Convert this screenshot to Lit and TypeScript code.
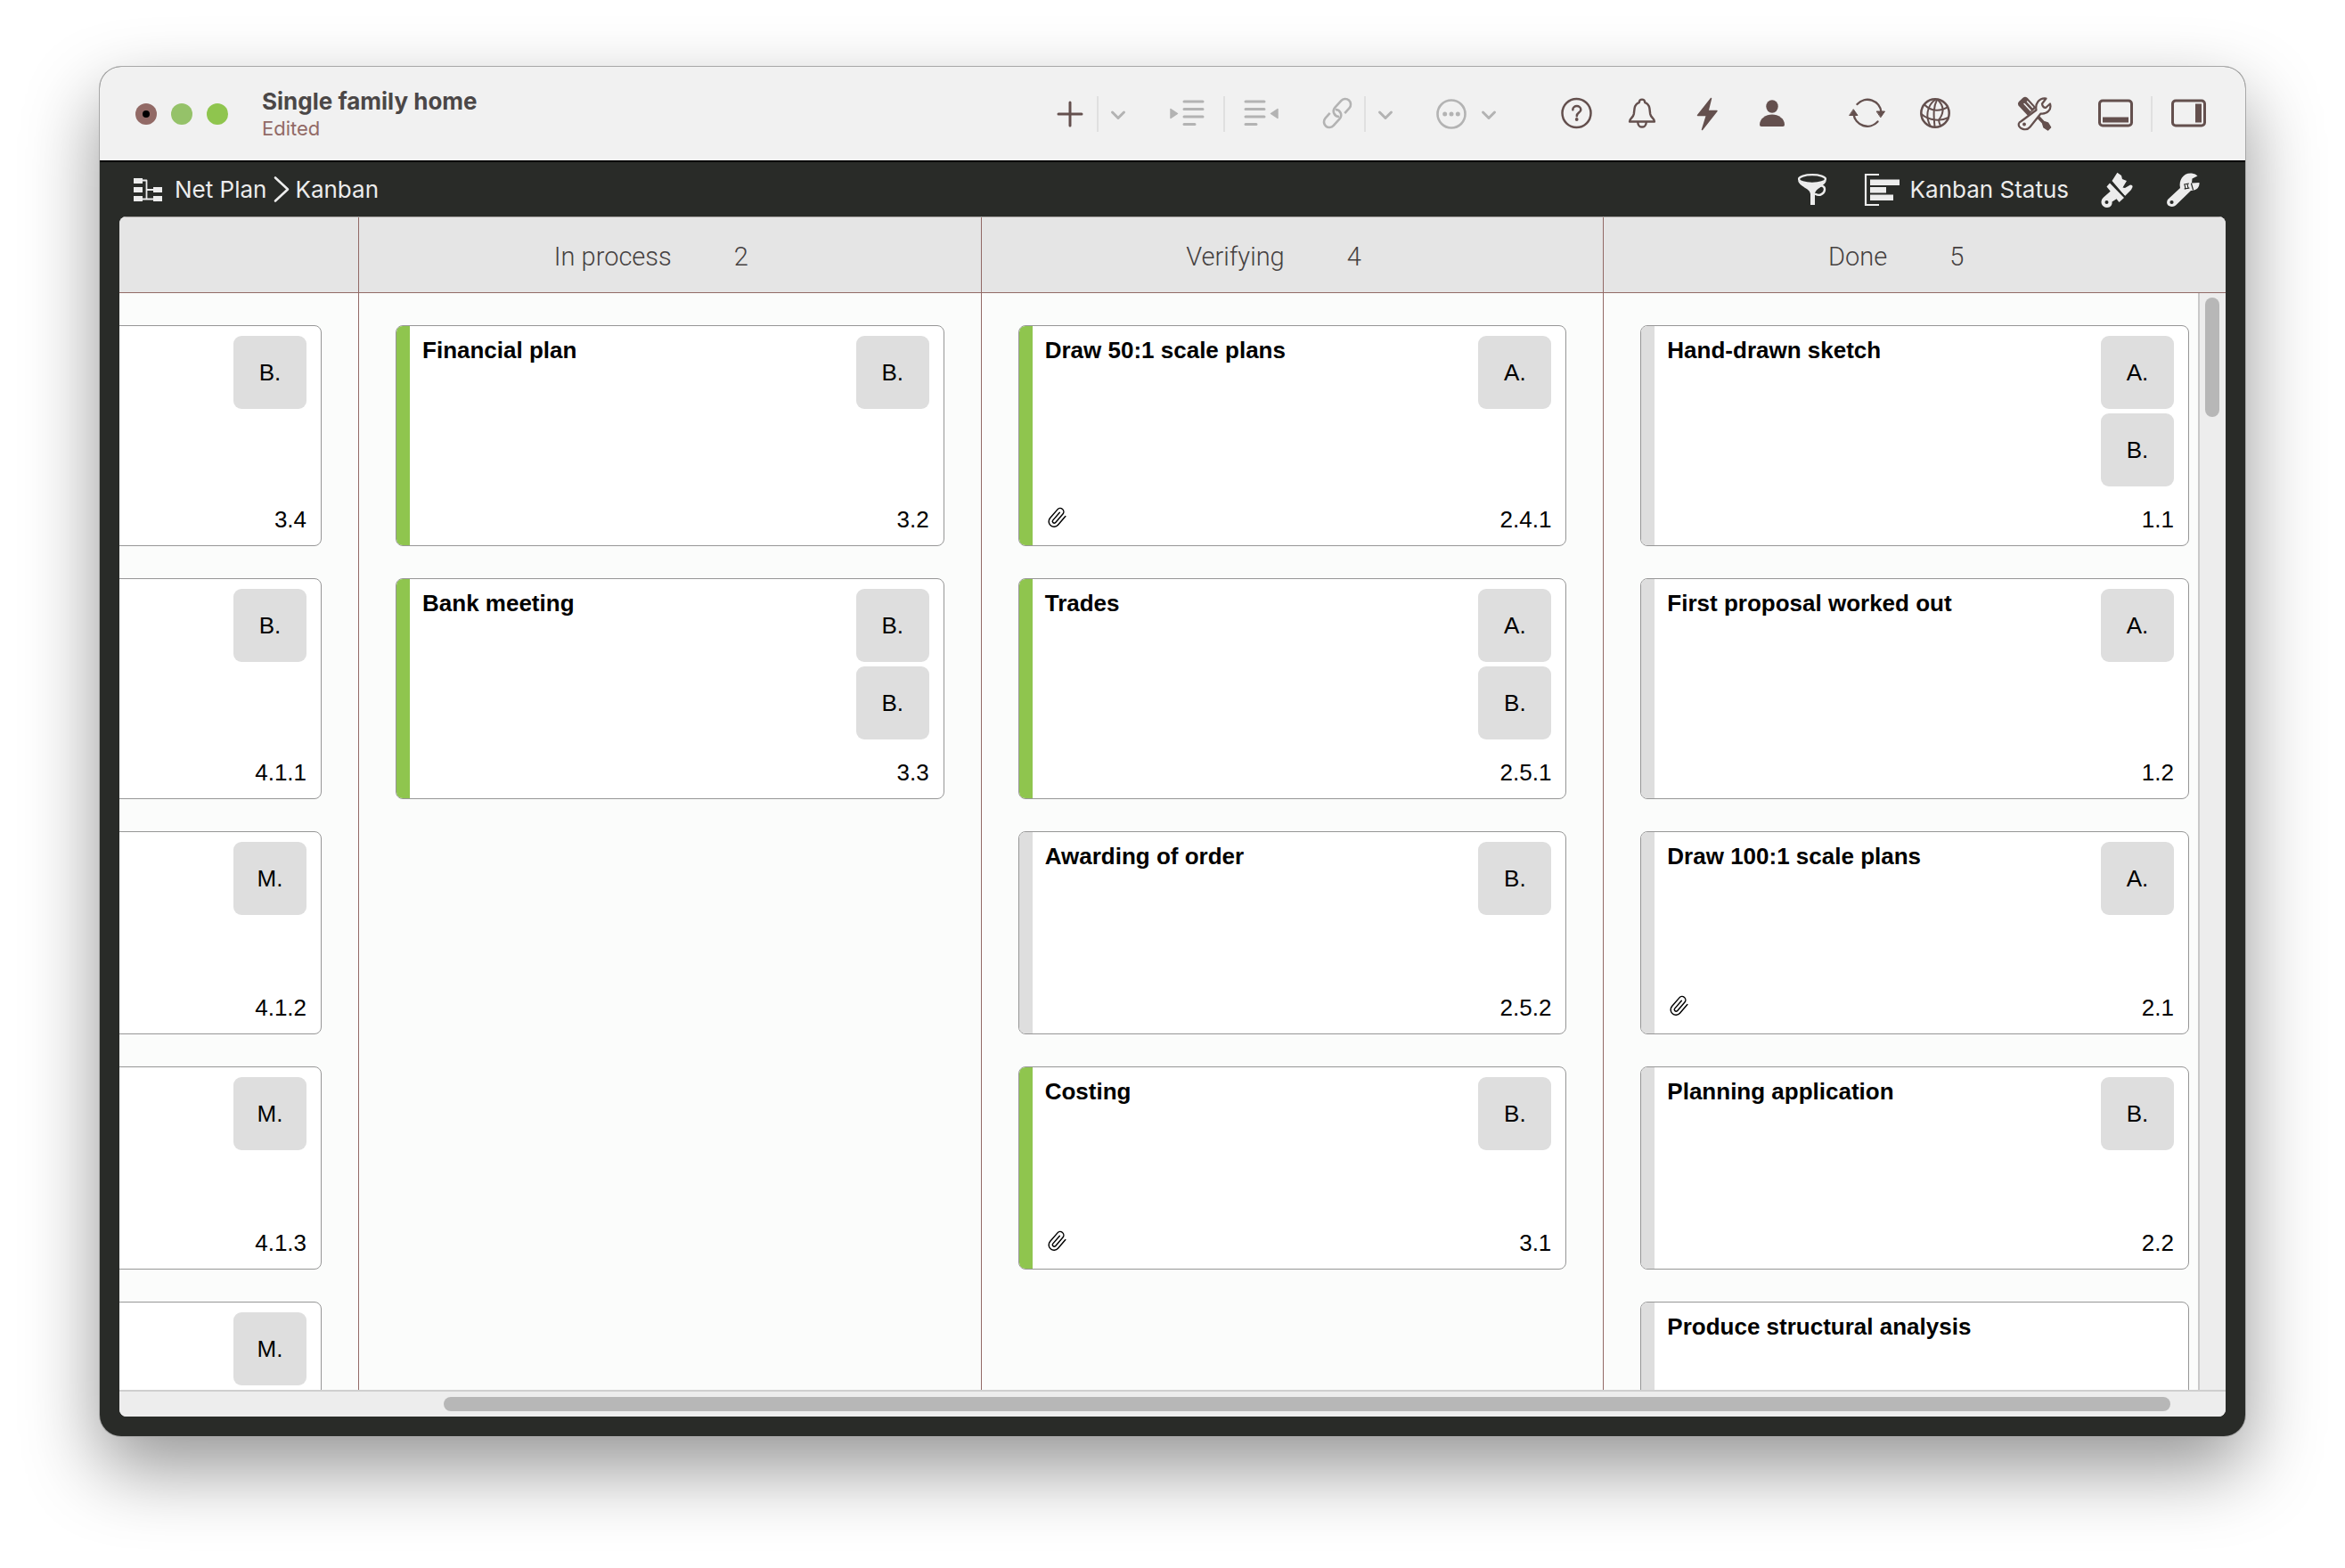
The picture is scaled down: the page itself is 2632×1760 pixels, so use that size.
import { LitElement, html, css, svg, nothing } from "lit";
import { customElement, property } from "lit/decorators.js";
import { classMap } from "lit/directives/class-map.js";

type Card = {
  title?: string;
  people: string[];
  code?: string;
  active?: boolean;
  files?: boolean;
};
type Column = { name?: string; cards: Card[] };

const COLUMNS: Column[] = [
  {
    cards: [
      { people: ["B."], code: "3.4" },
      { people: ["B."], code: "4.1.1" },
      { people: ["M."], code: "4.1.2" },
      { people: ["M."], code: "4.1.3" },
      { people: ["M."] },
    ],
  },
  {
    name: "In process",
    cards: [
      { title: "Financial plan", people: ["B."], code: "3.2", active: true },
      { title: "Bank meeting", people: ["B.", "B."], code: "3.3", active: true },
    ],
  },
  {
    name: "Verifying",
    cards: [
      { title: "Draw 50:1 scale plans", people: ["A."], code: "2.4.1", active: true, files: true },
      { title: "Trades", people: ["A.", "B."], code: "2.5.1", active: true },
      { title: "Awarding of order", people: ["B."], code: "2.5.2" },
      { title: "Costing", people: ["B."], code: "3.1", active: true, files: true },
    ],
  },
  {
    name: "Done",
    cards: [
      { title: "Hand-drawn sketch", people: ["A.", "B."], code: "1.1" },
      { title: "First proposal worked out", people: ["A."], code: "1.2" },
      { title: "Draw 100:1 scale plans", people: ["A."], code: "2.1", files: true },
      { title: "Planning application", people: ["B."], code: "2.2" },
      { title: "Produce structural analysis", people: [] },
    ],
  },
];

/* Toolbar glyphs, each drawn on a 40 x 40 grid. */
const GLYPHS = {
  plus: svg`<path d="M20 7v26M7 20h26" stroke-width="3" />`,
  indent: svg`<path d="M16 6h21M16 14.500h21M16 23h21M16 31.500h12" stroke-width="3" />
    <path d="M1 14.500v10l7.500-5z" fill="currentColor" stroke-width="1.500" />`,
  outdent: svg`<path d="M3 6h21M3 14.500h21M3 23h21M3 31.500h12" stroke-width="3" />
    <path d="M39 14.500v10l-7.500-5z" fill="currentColor" stroke-width="1.500" />`,
  link: svg`<g stroke-width="2.600" stroke-linecap="butt">
      <path transform="translate(20 19) rotate(-48)" d="M-5.500-6.200H-13.200a6.200 6.200 0 0 0 0 12.400H-3a6.200 6.200 0 0 0 4.500-10.500" />
      <path transform="translate(20 19) rotate(132)" d="M-5.500-6.200H-13.200a6.200 6.200 0 0 0 0 12.400H-3a6.200 6.200 0 0 0 4.500-10.500" />
    </g>`,
  more: svg`<circle cx="20" cy="20" r="15.500" stroke-width="2.600" />
    <g fill="currentColor" stroke="none"><circle cx="12.700" cy="20" r="2.500" /><circle cx="20" cy="20" r="2.500" /><circle cx="27.300" cy="20" r="2.500" /></g>`,
  help: svg`<circle cx="19.500" cy="19" r="16" stroke-width="2.500" />
    <path d="M15.300 15.200c0-5.500 9-5.500 9 0 0 3.200-4.500 3.200-4.500 7" stroke-width="2.500" />
    <circle cx="19.700" cy="26" r="1.900" fill="currentColor" stroke="none" />`,
  bell: svg`<path d="M6 28.500h28c.6-3-4.200-4.500-4.800-8.500l-.8-6.500c-.6-3.500-3-5.700-5.200-6.400 0-4.700-6.400-4.700-6.400 0-2.200.7-4.600 2.900-5.200 6.400l-.8 6.500c-.6 4-5.400 5.500-4.800 8.500z" stroke-width="2.400" />
    <path d="M15.300 29.500c.3 6.700 9.100 6.700 9.400 0" stroke-width="2.400" />`,
  bolt: svg`<path d="M24.500 2.500L9.500 21.500h10l-5 16L31 16.500H21z" fill="currentColor" stroke-width="1.500" />`,
  person: svg`<g fill="currentColor" stroke="none"><ellipse cx="20" cy="11.500" rx="6.700" ry="7.300" />
    <path d="M6 32c0-7 7-11.500 14-11.500S34 25 34 32q0 2-2 2H8q-2 0-2-2z" /></g>`,
  sync: svg`<g stroke-width="2.400"><path d="M8.500 9A15.500 15.500 0 0 1 35.500 18" /><path d="M31.500 28.500A15.500 15.500 0 0 1 4.500 20" /></g>
    <g fill="currentColor" stroke-width="1"><path d="M30.500 17h9l-4.500 6.500z" /><path d="M0 21.500h9L4.500 15z" /></g>`,
  globe: svg`<circle cx="20" cy="19" r="15.700" stroke-width="2.500" />
    <g stroke-width="2"><path d="M20.500 3.500C10 11 9 24 15 34" /><path d="M23 4c8 8 6 16 1.500 22-1 2 0 4 1.500 7" /><path d="M22 4c-4 8-4 16-2.500 30" />
    <path d="M8 9.500c8 8.500 19 7 25.500 3" /><path d="M4.500 20c9 8 22 8 30.500 4" /></g>`,
  tools: svg`<path d="M2 10q-1-2 .5-3.500L7 2.300q2-1.500 4 0l9.500 10.500-8.500 8z" fill="currentColor" stroke-width="1.500" />
    <path d="M8 8.500l7 7.500M11.500 6l6 6.500" stroke="#f1f1f1" stroke-width="1.500" />
    <path d="M21 22l7.500 8 1.500 5 4.500 3 3-3-3-5-4.500-1.500-7-7.500z" fill="currentColor" stroke-width="1.500" />
    <path d="M4 28.500L21.500 15.500C20 8 25 1.500 32.500 2.500L28 8.500q.5 4 4 4.500l5-4.500C39 15 33.500 20.500 26.500 19.500L14.500 34.500C10 40 0 36 2 30.500q.5-1.500 2-2z" fill="#f1f1f1" stroke-width="2.200" />
    <circle cx="8" cy="31.500" r="1.900" fill="currentColor" stroke="none" />`,
  bottomPanel: svg`<rect x="2.500" y="5" width="36" height="28" rx="3.500" stroke-width="3" /><path d="M6 23.500h29v6H6z" fill="currentColor" stroke="none" />`,
  sidePanel: svg`<rect x="2.500" y="5" width="36" height="28" rx="3.500" stroke-width="3" /><path d="M28 8.500h7v21h-7z" fill="currentColor" stroke="none" />`,
  chevron: svg`<path d="M13.500 18l6.500 6.500 6.500-6.500" stroke-width="3" />`,
  plan: svg`<path d="M4 7h10v6H4zM4 17h10v6H4zM4 27h10v6H4zM26 17h10v6H26zM26 27h10v6H26z" fill="currentColor" stroke="none" />
    <path d="M14 9.500h4.500v21M18.500 20H26M14 30.500h12" stroke-width="1.800" stroke-linecap="butt" />`,
  crumb: svg`<path d="M14 6.500l14 13-14 13" stroke-width="2.600" />`,
  funnel: svg`<ellipse cx="20" cy="8" rx="15" ry="4.800" stroke-width="2.200" />
    <path d="M4 9c1 8 14 9 14 16v12h5V25c0-7 12-9 13-16-4 5.500-28 5.500-32 0z" fill="currentColor" stroke="none" />
    <path d="M27 17c3-2.500 7-1.500 7 2.500 0 4.500-5.500 8-10 5.500" stroke-width="2.400" />`,
  status: svg`<path d="M17 3H2v34h15" stroke-width="2.200" stroke-linecap="butt" stroke-linejoin="miter" />
    <path d="M7 8.500h33v6.500H7zM7 17h18v6.500H7zM7 25.500h26V32H7z" fill="currentColor" stroke="none" />`,
  brush: svg`<g fill="currentColor" stroke="none">
      <path d="M14.500 10L20.400.7 25 4l1 4 5 2-4.500 7.500 2.500.5 6-3.500q3 0 2.500 2.500L36 20l-7 7z" />
      <path d="M12 12.500L28 29l-5.500 5L8.500 16.500z" />
      <path d="M13.500 21L5 28.500C0 33 3 40 9 40c4 0 6-3 5.500-6.500L20 30z" /></g>
    <path d="M12.500 11L30 29" stroke="#292b28" stroke-width="1.500" />
    <circle cx="8.500" cy="34" r="2" fill="#292b28" stroke="none" />`,
  wrench: svg`<path d="M3 31L17 18C15 8.500 21 .5 30 1.500q4.500.5 6.500 3l-6 3-.5 5 8.500-.5c.5 5-3 9-9.500 9L13.500 36C9 42-1 38 3 31z" fill="currentColor" stroke="none" />
    <circle cx="7.500" cy="34" r="2.100" fill="#292b28" stroke="none" />
    <path d="M22 14l1 5M25 13.500l1 5M21.500 14l5-1M22 19l5-1M29.500 13l2 7" stroke="#292b28" stroke-width="1.200" />`,
  clip: svg`<path transform="translate(3 -1) rotate(-4 20 20) scale(1.400)" stroke-width="1.500"
    d="M21.400 11l-9.200 9.200a6 6 0 0 1-8.500-8.500l9.200-9.200a4 4 0 0 1 5.700 5.700l-9.200 9.200a2 2 0 0 1-2.800-2.800l8.500-8.500" />`,
};
type GlyphName = keyof typeof GLYPHS;

@customElement("ui-glyph")
class UiGlyph extends LitElement {
  @property() name: GlyphName = "plus";

  static styles = css`
    :host { display: block; width: 40px; height: 40px; flex: none; }
    .glyph {
      display: block; width: 100%; height: 100%; overflow: visible;
      fill: none; stroke: currentColor; stroke-linecap: round; stroke-linejoin: round;
    }
  `;

  render() {
    return html`<svg class="glyph" viewBox="0 0 40 40" aria-hidden="true">${GLYPHS[this.name]}</svg>`;
  }
}

@customElement("task-card")
class TaskCard extends LitElement {
  @property({ attribute: false }) card!: Card;

  static styles = css`
    :host { display: block; }
    .card {
      box-sizing: border-box; height: 100%; display: flex; overflow: hidden;
      border: 1px solid #969696; border-radius: 8px; background: #fff; color: #000;
      font: 26px/30px "Liberation Sans", Arial, sans-serif;
    }
    .stripe { flex: 0 0 15px; background: #dedede; }
    .active .stripe { background: #8fc54e; }
    .main { flex: 1; display: flex; flex-direction: column; padding: 12px 12px 14px 14px; }
    .title { margin: 0; font-size: 26px; line-height: 30px; font-weight: 700; }
    .clip { width: 28px; height: 28px; margin-top: auto; }
    .side { display: flex; flex-direction: column; align-items: flex-end; padding: 11px 16px 14px 0; }
    .people { display: flex; flex-direction: column; gap: 5px; margin: 0; padding: 0; list-style: none; }
    .person {
      display: grid; place-items: center; width: 82px; height: 82px;
      border-radius: 9px; background: #dedede;
    }
    .code { margin-top: auto; }
  `;

  render() {
    const { title, people, code, active, files } = this.card;
    return html`
      <article class=${classMap({ card: true, active: !!active })}>
        <div class="stripe"></div>
        <div class="main">
          ${title ? html`<h3 class="title">${title}</h3>` : nothing}
          ${files ? html`<ui-glyph class="clip" name="clip"></ui-glyph>` : nothing}
        </div>
        <div class="side">
          <ul class="people">${people.map((p) => html`<li class="person">${p}</li>`)}</ul>
          ${code ? html`<span class="code">${code}</span>` : nothing}
        </div>
      </article>
    `;
  }
}

@customElement("kanban-board")
class KanbanBoard extends LitElement {
  static styles = css`
    :host { display: flex; flex-direction: column; min-height: 0; overflow: hidden; background: #fbfcfb; }
    .heads, .columns { display: flex; justify-content: flex-end; }
    .heads {
      flex: 0 0 84px; border-top: 1px solid #a9a4a3; border-bottom: 1px solid #926a66;
      background: #e5e5e5; color: #454141; font: 300 29px/36px Roboto, "Liberation Sans", sans-serif;
    }
    .head, .column { box-sizing: border-box; flex: 0 0 calc((100% - 268px) / 3); border-left: 1px solid #926a66; }
    .head {
      display: flex; align-items: center; justify-content: center; gap: 70px;
      padding: 3px 42px 0 0; margin: 0; font: inherit;
    }
    .viewport { position: relative; flex: 1; min-height: 0; overflow: hidden; display: flex; flex-direction: column; }
    .columns { flex: 1; min-height: 0; }
    .column {
      display: grid; grid-template-rows: 248px 248px; grid-auto-rows: 228px; row-gap: 36px;
      align-content: start; padding: 36px 41px 0 41px;
    }
    .vbar {
      position: absolute; top: 0; right: 0; bottom: 0; box-sizing: border-box; width: 31px;
      padding: 5px 7px 5px 6px; border-left: 2px solid #c9c9c9; background: #ededed;
    }
    .vthumb { height: 11%; border-radius: 8px; background: #b7b7b7; }
    .hbar {
      box-sizing: border-box; flex: 0 0 30px; padding: 6px 62px 6px 364px;
      border-top: 2px solid #cfcfcf; background: #ededed;
    }
    .hthumb { height: 16px; border-radius: 8px; background: #b7b7b7; }
  `;

  render() {
    return html`
      <div class="heads">
        ${COLUMNS.map(
          (c) => html`<h2 class="head">
            ${c.name ? html`<span>${c.name}</span><span>${c.cards.length}</span>` : nothing}
          </h2>`
        )}
      </div>
      <div class="viewport">
        <div class="columns">
          ${COLUMNS.map(
            (c) => html`<section class="column">
              ${c.cards.map((card) => html`<task-card .card=${card}></task-card>`)}
            </section>`
          )}
        </div>
        <div class="vbar"><div class="vthumb"></div></div>
      </div>
      <div class="hbar"><div class="hthumb"></div></div>
    `;
  }
}

@customElement("app-root")
class AppRoot extends LitElement {
  static styles = css`
    :host {
      box-sizing: border-box; display: flex; height: 100vh; padding: 75px 112px 148px; overflow: hidden;
      background: #fff; font-family: Inter, "Liberation Sans", sans-serif;
    }
    .window {
      flex: 1; min-width: 0; min-height: 0; display: flex; flex-direction: column; overflow: hidden;
      border-radius: 24px; background: #292b28;
      box-shadow: 0 0 0 1px #a8a8a8, 0 36px 84px rgba(0, 0, 0, 0.42);
    }
    .titlebar {
      flex: 0 0 105px; box-sizing: border-box; display: flex; align-items: center;
      padding: 0 44px 0 40px; background: #f1f1f1;
    }
    .lights { display: flex; gap: 16px; }
    .light {
      display: grid; place-items: center; width: 24px; height: 24px; padding: 0;
      border: 0; border-radius: 50%; background: #8fc54e;
    }
    .close { background: #926a66; }
    .close::after { content: ""; width: 8px; height: 8px; border-radius: 50%; background: #000; }
    .minimise { background: #95c269; }
    .doc { margin: 0 auto 0 38px; }
    .name { margin: 0; font-size: 26px; line-height: 32px; font-weight: 700; color: #4b4747; }
    .state { margin: 0; font-size: 22px; line-height: 28px; color: #926a66; }
    .tools { display: flex; align-items: center; }
    .group { display: flex; align-items: center; color: #64504e; }
    .muted { color: #b3b3b3; }
    .tight { gap: 10px; }
    .pair { gap: 20px; }
    .wide { gap: 33px; }
    .wider { gap: 36px; }
    .near { margin-left: 42px; }
    .mid { margin-left: 46px; }
    .last { margin-left: 50px; }
    .apart { margin-left: 67px; }
    .far { margin-left: 72px; }
    .tool { display: grid; place-items: center; width: 40px; height: 40px; padding: 0; border: 0; background: none; color: inherit; }
    .drop { width: 24px; color: #b3b3b3; }
    .drop ui-glyph { margin: 0 -8px; }
    .rule { width: 2px; height: 40px; background: #e0e0e0; }
    .pathbar {
      flex: 0 0 63px; box-sizing: border-box; display: flex; align-items: center;
      padding: 0 50px 0 34px; border-top: 2px solid #000; color: #ececec; font-size: 26px; line-height: 32px;
    }
    .crumbs { display: flex; align-items: center; margin-right: auto; }
    .crumb { color: inherit; text-decoration: none; }
    .link { display: flex; align-items: center; gap: 10px; }
    .arrow { margin: 0 -4px; }
    .views { display: flex; align-items: center; gap: 34px; }
    .view {
      display: flex; align-items: center; gap: 12px; padding: 0 0 0 4px; border: 0;
      background: none; color: inherit; font: inherit;
    }
    .board { flex: 1; margin: 0 22px 22px; border-radius: 8px; }
  `;

  private tool(name: GlyphName, label: string, drop = false) {
    return html`<button class=${classMap({ tool: true, drop })} aria-label=${label}>
      <ui-glyph name=${name}></ui-glyph>
    </button>`;
  }

  render() {
    const rule = html`<span class="rule"></span>`;
    return html`
      <main class="window">
        <header class="titlebar">
          <div class="lights">
            <button class="light close" aria-label="Close"></button>
            <button class="light minimise" aria-label="Minimise"></button>
            <button class="light" aria-label="Zoom"></button>
          </div>
          <div class="doc">
            <h1 class="name">Single family home</h1>
            <p class="state">Edited</p>
          </div>
          <div class="tools">
            <div class="group tight">${this.tool("plus", "Add")}${rule}${this.tool("chevron", "Add options", true)}</div>
            <div class="group pair muted mid">${this.tool("indent", "Indent")}${rule}${this.tool("outdent", "Outdent")}</div>
            <div class="group tight muted mid">${this.tool("link", "Link")}${rule}${this.tool("chevron", "Link options", true)}</div>
            <div class="group tight muted near">${this.tool("more", "More")}${this.tool("chevron", "More options", true)}</div>
            <div class="group wide apart">
              ${this.tool("help", "Help")}${this.tool("bell", "Notifications")}${this.tool("bolt", "Actions")}${this.tool("person", "Account")}
            </div>
            <div class="group wider apart">${this.tool("sync", "Sync")}${this.tool("globe", "Web")}</div>
            <div class="group far">${this.tool("tools", "Tools")}</div>
            <div class="group pair last">${this.tool("bottomPanel", "Bottom panel")}${rule}${this.tool("sidePanel", "Side panel")}</div>
          </div>
        </header>
        <div class="pathbar">
          <nav class="crumbs" aria-label="Location">
            <a class="crumb link" href="#plan"><ui-glyph name="plan"></ui-glyph>Net Plan</a>
            <ui-glyph class="arrow" name="crumb"></ui-glyph>
            <a class="crumb" href="#kanban">Kanban</a>
          </nav>
          <div class="views">
            ${this.tool("funnel", "Filter")}
            <button class="view"><ui-glyph name="status"></ui-glyph>Kanban Status</button>
            ${this.tool("brush", "Style")}${this.tool("wrench", "Settings")}
          </div>
        </div>
        <kanban-board class="board"></kanban-board>
      </main>
    `;
  }
}
